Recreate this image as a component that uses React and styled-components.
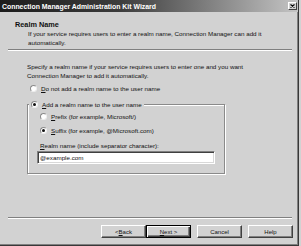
import React from 'react';
import styled, { createGlobalStyle, css } from 'styled-components';

const FACE = '#d2d2d2';

const GlobalStyle = createGlobalStyle`
  html, body { margin: 0; padding: 0; background: ${FACE}; }
  body { font-family: "Liberation Sans", Arial, sans-serif; }
`;

const Window = styled.div`
  width: 299px;
  height: 246px;
  box-sizing: border-box;
  display: flex;
  flex-direction: column;
  background: ${FACE};
  border-right: 1px solid #383838;
  border-bottom: 1px solid #383838;
  box-shadow: inset -1px -1px 0 #808080;
  color: #111;
  font-family: "Liberation Sans", Arial, sans-serif;
  overflow: hidden;
`;

const TitleBar = styled.div`
  height: 12px;
  flex: none;
  display: flex;
  align-items: center;
  justify-content: space-between;
  padding: 0 1px 0 2px;
  background: linear-gradient(to right, #1c1c1c 0%, #3c3c3c 40%, #c4c4c4 100%);
  color: #fff;
  font-weight: bold;
  font-size: 6.9px;
  white-space: nowrap;
`;

const CloseButton = styled.div`
  width: 9px;
  height: 8px;
  box-sizing: border-box;
  background: ${FACE};
  border: 1px solid;
  border-color: #fff #404040 #404040 #fff;
  display: flex;
  align-items: center;
  justify-content: center;
`;

const Header = styled.div`
  height: 37px;
  flex: none;
  box-sizing: border-box;
  padding: 8px 0 0 15px;
`;

const HeaderTitle = styled.div`
  font-weight: bold;
  font-size: 7.3px;
  line-height: 9px;
`;

const HeaderText = styled.div`
  margin-left: 13px;
  font-size: 6.25px;
  line-height: 9px;
`;

const Etched = styled.div`
  flex: none;
  height: 0;
  border-top: 1px solid #808080;
  border-bottom: 1px solid #fff;
  margin: 0 6px 0 8px;
`;

const Body = styled.div`
  flex: 1;
  padding: 11px 0 0 27px;
`;

const Paragraph = styled.div`
  font-size: 6.25px;
  line-height: 9px;
`;

const Option = styled.div`
  display: flex;
  align-items: center;
  gap: 4px;
  height: 9px;
  font-size: 6.25px;
  line-height: 9px;
  white-space: nowrap;
  margin-left: ${p => p.$indent || 0}px;
  margin-top: ${p => p.$mt || 0}px;
`;

const RadioDot = styled.span`
  width: 7px;
  height: 7px;
  border-radius: 50%;
  box-sizing: border-box;
  flex: none;
  background: #fff;
  border: 1px solid;
  border-color: #8a8a8a #eeeeee #eeeeee #8a8a8a;
  display: flex;
  align-items: center;
  justify-content: center;
  &::after {
    content: '';
    width: 3px;
    height: 3px;
    border-radius: 50%;
    background: #111;
    display: ${p => (p.$checked ? 'block' : 'none')};
  }
`;

const GroupBox = styled.div`
  width: 198px;
  box-sizing: border-box;
  margin-top: 11px;
  border: 1px solid #8a8a8a;
  box-shadow: inset 1px 1px 0 #fff, 1px 1px 0 #fff;
  padding: 0 0 9px 9px;
`;

const GroupTitle = styled(Option)`
  width: fit-content;
  margin-top: -5px;
  margin-left: -8px;
  padding: 0 2px;
  background: ${FACE};
`;

const FieldLabel = styled.div`
  font-size: 6.25px;
  line-height: 9px;
  margin: 6px 0 1px 3px;
`;

const TextField = styled.div`
  width: 178px;
  height: 13px;
  box-sizing: border-box;
  background: #fff;
  border: 1px solid;
  border-color: #808080 #fff #fff #808080;
  box-shadow: inset 1px 1px 0 #404040, inset -1px -1px 0 #d8d8d8;
  font-size: 6.25px;
  display: flex;
  align-items: center;
  padding-left: 2px;
`;

const Footer = styled.div`
  flex: none;
  height: 28px;
  display: flex;
  flex-direction: column;
`;

const ButtonRow = styled.div`
  display: flex;
  justify-content: flex-end;
  gap: 6px;
  margin-top: 6px;
  padding-right: 5px;
`;

const ButtonPair = styled.div`
  display: flex;
`;

const Button = styled.div`
  width: 45px;
  height: 13px;
  box-sizing: border-box;
  font-size: 6px;
  background: ${FACE};
  border: 1px solid;
  border-color: #fff #404040 #404040 #fff;
  box-shadow: inset -1px -1px 0 #808080;
  display: flex;
  align-items: center;
  justify-content: center;
  white-space: nowrap;
  ${p =>
    p.$default &&
    css`
      border-color: #000;
      box-shadow: inset 1px 1px 0 #fff, inset -1px -1px 0 #404040, inset -2px -2px 0 #808080;
    `}
`;

function Radio({ checked, indent, mt, children }) {
  return (
    <Option $indent={indent} $mt={mt}>
      <RadioDot $checked={checked} />
      <span>{children}</span>
    </Option>
  );
}

export default function App() {
  return (
    <>
      <GlobalStyle />
      <Window>
        <TitleBar>
          <span>Connection Manager Administration Kit Wizard</span>
          <CloseButton>
            <svg width="5" height="4" viewBox="0 0 5 4">
              <path d="M0.5 0.5 L4.5 3.5 M4.5 0.5 L0.5 3.5" stroke="#000" strokeWidth="1.1" />
            </svg>
          </CloseButton>
        </TitleBar>
        <Header>
          <HeaderTitle>Realm Name</HeaderTitle>
          <HeaderText>
            If your service requires users to enter a realm name, Connection Manager can add it
            <br />
            automatically.
          </HeaderText>
        </Header>
        <Etched />
        <Body>
          <Paragraph>
            Specify a realm name if your service requires users to enter one and you want
            <br />
            Connection Manager to add it automatically.
          </Paragraph>
          <Radio indent={3} mt={4}>
            <u>D</u>o not add a realm name to the user name
          </Radio>
          <GroupBox>
            <GroupTitle>
              <RadioDot $checked />
              <span>
                <u>A</u>dd a realm name to the user name
              </span>
            </GroupTitle>
            <Radio indent={3} mt={3}>
              <u>P</u>refix (for example, Microsoft/)
            </Radio>
            <Radio indent={3} mt={5} checked>
              <u>S</u>uffix (for example, @Microsoft.com)
            </Radio>
            <FieldLabel>
              <u>R</u>ealm name (include separator character):
            </FieldLabel>
            <TextField>@example.com</TextField>
          </GroupBox>
        </Body>
        <Footer>
          <Etched />
          <ButtonRow>
            <ButtonPair>
              <Button>
                &lt; <u>B</u>ack
              </Button>
              <Button $default>
                <u>N</u>ext &gt;
              </Button>
            </ButtonPair>
            <Button>Cancel</Button>
            <Button>Help</Button>
          </ButtonRow>
        </Footer>
      </Window>
    </>
  );
}
